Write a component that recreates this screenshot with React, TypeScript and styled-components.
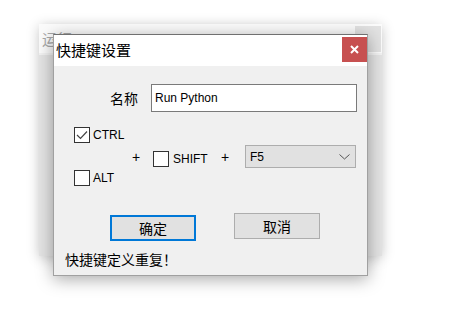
import React from 'react';
import styled, { createGlobalStyle } from 'styled-components';

const GlobalStyle = createGlobalStyle`
  body {
    margin: 0;
    background: #ffffff;
    font-family: "Liberation Sans", "Noto Sans CJK SC", sans-serif;
    color: #000;
  }
`;

const Desktop = styled.div`
  position: relative;
  width: 460px;
  height: 309px;
  overflow: hidden;
  background: #fff;
`;

// window behind the dialog
const BackWindow = styled.div`
  position: absolute;
  left: 39px;
  top: 24px;
  width: 343px;
  height: 232px;
  display: flex;
  flex-direction: column;
  background: #e4e4e4;
  box-shadow: 0 2px 12px rgba(0, 0, 0, 0.22);
`;

const BackTitle = styled.div`
  height: 29px;
  display: flex;
  align-items: center;
  justify-content: space-between;
  background: #fbfbfb;
  border-bottom: 2px solid #f2f2f2;
  padding-left: 3px;
  font-family: "Noto Sans CJK SC", sans-serif;
  font-size: 15px;
  color: #a8a8a8;
`;

const BackClose = styled.div`
  width: 26px;
  height: 26px;
  margin-right: 1px;
  background: #e2e2e2;
`;

const Dialog = styled.div`
  position: absolute;
  left: 53px;
  top: 34px;
  width: 315px;
  height: 242px;
  box-sizing: border-box;
  display: flex;
  flex-direction: column;
  border: 1px solid #a0a0a0;
  border-top-color: #707070;
  background: #f0f0f0;
  box-shadow: 0 3px 16px rgba(0, 0, 0, 0.35);
`;

const TitleBar = styled.div`
  height: 31px;
  display: flex;
  align-items: flex-start;
  justify-content: space-between;
  background: #fff;
`;

const TitleText = styled.span`
  margin: 4px 0 0 2px;
  font-family: "Noto Sans CJK SC", sans-serif;
  font-size: 15px;
  line-height: 22px;
`;

const CloseButton = styled.div`
  width: 25px;
  height: 25px;
  margin-top: 2px;
  background: #c75050;
  display: flex;
  align-items: center;
  justify-content: center;
`;

const Body = styled.div`
  flex: 1;
  display: flex;
  flex-direction: column;
  padding: 18px 0 0 0;
`;

const NameRow = styled.div`
  display: flex;
  align-items: center;
  margin-left: 56px;
  gap: 13px;
`;

const CnLabel = styled.span`
  font-family: "Noto Sans CJK SC", sans-serif;
  font-size: 14px;
  line-height: 20px;
`;

const TextInput = styled.div`
  width: 206px;
  height: 28px;
  box-sizing: border-box;
  border: 1px solid #7a7a7a;
  background: #fff;
  padding-left: 3px;
  display: flex;
  align-items: center;
  font-size: 12px;
`;

const KeysRow = styled.div`
  display: flex;
  align-items: center;
  margin: 15px 0 0 20px;
`;

const ModColumn = styled.div`
  width: 59px;
  display: flex;
  flex-direction: column;
  gap: 27px;
`;

const CheckItem = styled.label`
  display: flex;
  align-items: center;
  height: 16px;
  gap: 3px;
  font-size: 12px;
`;

const Box = styled.span`
  width: 16px;
  height: 16px;
  box-sizing: border-box;
  border: 1px solid #333;
  background: #fff;
  display: flex;
  align-items: center;
  justify-content: center;
`;

const Plus = styled.span<{ $gap: number }>`
  width: 8px;
  margin-left: -1px;
  font-size: 14px;
  line-height: 16px;
  margin-right: ${p => p.$gap}px;
`;

const ShiftItem = styled(CheckItem)`
  margin-top: 5px;
  gap: 4px;
  margin-right: 14px;
`;

const ShiftText = styled.span`
  width: 35px;
  white-space: nowrap;
`;

const Select = styled.div`
  width: 111px;
  height: 23px;
  box-sizing: border-box;
  border: 1px solid #adadad;
  background: #e1e1e1;
  display: flex;
  align-items: center;
  justify-content: space-between;
  padding: 0 5px 0 4px;
  font-size: 12px;
`;

const ButtonRow = styled.div`
  display: flex;
  align-items: flex-start;
  gap: 38px;
  margin: 27px 0 0 56px;
`;

const Button = styled.div<{ $default?: boolean }>`
  width: 86px;
  height: 26px;
  box-sizing: border-box;
  margin-top: ${p => (p.$default ? 2 : 0)}px;
  border: ${p => (p.$default ? '2px solid #0078d7' : '1px solid #adadad')};
  background: #e1e1e1;
  display: flex;
  align-items: center;
  justify-content: center;
  font-family: "Noto Sans CJK SC", sans-serif;
  font-size: 14px;
`;

const Status = styled.div`
  margin: 9px 0 0 11px;
  font-family: "Noto Sans CJK SC", sans-serif;
  font-size: 14px;
  line-height: 18px;
`;

const Check = () => (
  <svg width="12" height="10" viewBox="0 0 12 10">
    <path d="M1 5 L4.5 8.5 L11 1.5" fill="none" stroke="#444" strokeWidth="1.2" />
  </svg>
);

const Chevron = () => (
  <svg width="11" height="6" viewBox="0 0 11 6">
    <path d="M0.5 0.5 L5.5 5 L10.5 0.5" fill="none" stroke="#555" strokeWidth="1" />
  </svg>
);

const App = () => {
  return (
    <>
      <GlobalStyle />
      <Desktop>
        <BackWindow>
          <BackTitle>
            运行
            <BackClose />
          </BackTitle>
        </BackWindow>

        <Dialog>
          <TitleBar>
            <TitleText>快捷键设置</TitleText>
            <CloseButton>
              <svg width="9" height="9" viewBox="0 0 9 9">
                <path d="M1 1 L8 8 M8 1 L1 8" stroke="#fff" strokeWidth="2" />
              </svg>
            </CloseButton>
          </TitleBar>

          <Body>
            <NameRow>
              <CnLabel>名称</CnLabel>
              <TextInput>Run Python</TextInput>
            </NameRow>

            <KeysRow>
              <ModColumn>
                <CheckItem>
                  <Box><Check /></Box>
                  CTRL
                </CheckItem>
                <CheckItem>
                  <Box />
                  ALT
                </CheckItem>
              </ModColumn>
              <Plus $gap={13}>+</Plus>
              <ShiftItem>
                <Box />
                <ShiftText>SHIFT</ShiftText>
              </ShiftItem>
              <Plus $gap={16}>+</Plus>
              <Select>
                F5
                <Chevron />
              </Select>
            </KeysRow>

            <ButtonRow>
              <Button $default>确定</Button>
              <Button>取消</Button>
            </ButtonRow>

            <Status>快捷键定义重复！</Status>
          </Body>
        </Dialog>
      </Desktop>
    </>
  );
};

export default App;
